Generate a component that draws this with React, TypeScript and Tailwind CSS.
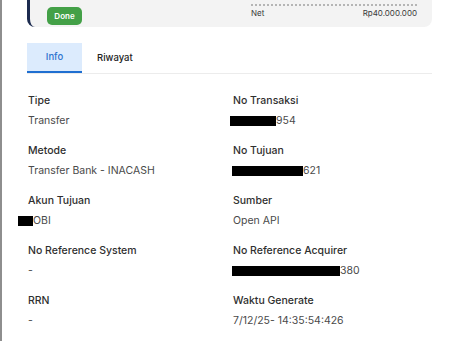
import React from 'react';

type Field = {
  label: string;
  value: string;
  mask?: number;
  maskShift?: number;
};

const left: Field[] = [
  { label: 'Tipe', value: 'Transfer' },
  { label: 'Metode', value: 'Transfer Bank - INACASH' },
  { label: 'Akun Tujuan', value: 'OBI', mask: 15, maskShift: 10 },
  { label: 'No Reference System', value: '-' },
  { label: 'RRN', value: '-' },
];

const right: Field[] = [
  { label: 'No Transaksi', value: '954', mask: 46, maskShift: 3 },
  { label: 'No Tujuan', value: '621', mask: 71, maskShift: 1 },
  { label: 'Sumber', value: 'Open API' },
  { label: 'No Reference Acquirer', value: '380', mask: 108, maskShift: 1 },
  { label: 'Waktu Generate', value: '7/12/25- 14:35:54:426' },
];

const FieldItem: React.FC<{ f: Field }> = ({ f }) => (
  <div className="h-[40px]">
    <div className="h-[20px] leading-[20px] text-[10.5px] font-medium text-[#2f2f2f]">{f.label}</div>
    <div className="h-[20px] leading-[20px] text-[10.5px] text-[#4a4a4a] flex items-center">
      {f.mask ? (
        <span
          className="inline-block h-[10px] bg-black"
          style={{ width: f.mask, marginLeft: -(f.maskShift ?? 0) }}
        />
      ) : null}
      <span>{f.value}</span>
    </div>
  </div>
);

export default function App() {
  return (
    <div
      className="w-[454px] h-[341px] overflow-hidden bg-white border-l-2 border-[#8e8e8e]"
      style={{ fontFamily: 'Inter, "Noto Sans", sans-serif' }}
    >
      <div className="pl-[25px] w-[430px]">
        {/* Summary card (cut off at top) */}
        <div className="h-[27px] bg-[#f3f3f3] rounded-b-lg border-l-[3px] border-[#1c2b4f] flex">
          <div className="pl-[17px] pt-px">
            <span className="inline-flex items-center justify-center w-[35px] h-[18px] rounded-[5px] bg-[#43a047] text-white text-[8px] font-semibold">
              Done
            </span>
          </div>
          <div className="ml-auto mr-[15px] w-[166px] pt-[4px]">
            <div className="border-t-2 border-dotted border-[#b5b5b5]" />
            <div className="flex justify-between text-[8px] text-[#3a3a3a] leading-[12px] pt-px">
              <span>Net</span>
              <span>Rp40.000.000</span>
            </div>
          </div>
        </div>

        {/* Tabs */}
        <div className="mt-[16px] flex border-b border-[#ececec] text-[9.5px]">
          <div className="w-[55px] h-[30px] pt-px bg-[#dcebfd] border-b-2 border-[#1f6fd1] flex items-center justify-center text-[#2f74cf] font-medium">
            Info
          </div>
          <div className="px-[15px] h-[30px] pt-px flex items-center text-[#222] font-medium">Riwayat</div>
        </div>

        {/* Detail grid */}
        <div className="mt-[17px] pl-px grid grid-cols-[205px_1fr]">
          <div className="flex flex-col gap-[10px]">
            {left.map((f) => (
              <FieldItem key={f.label} f={f} />
            ))}
          </div>
          <div className="flex flex-col gap-[10px]">
            {right.map((f) => (
              <FieldItem key={f.label} f={f} />
            ))}
          </div>
        </div>
      </div>
    </div>
  );
}
